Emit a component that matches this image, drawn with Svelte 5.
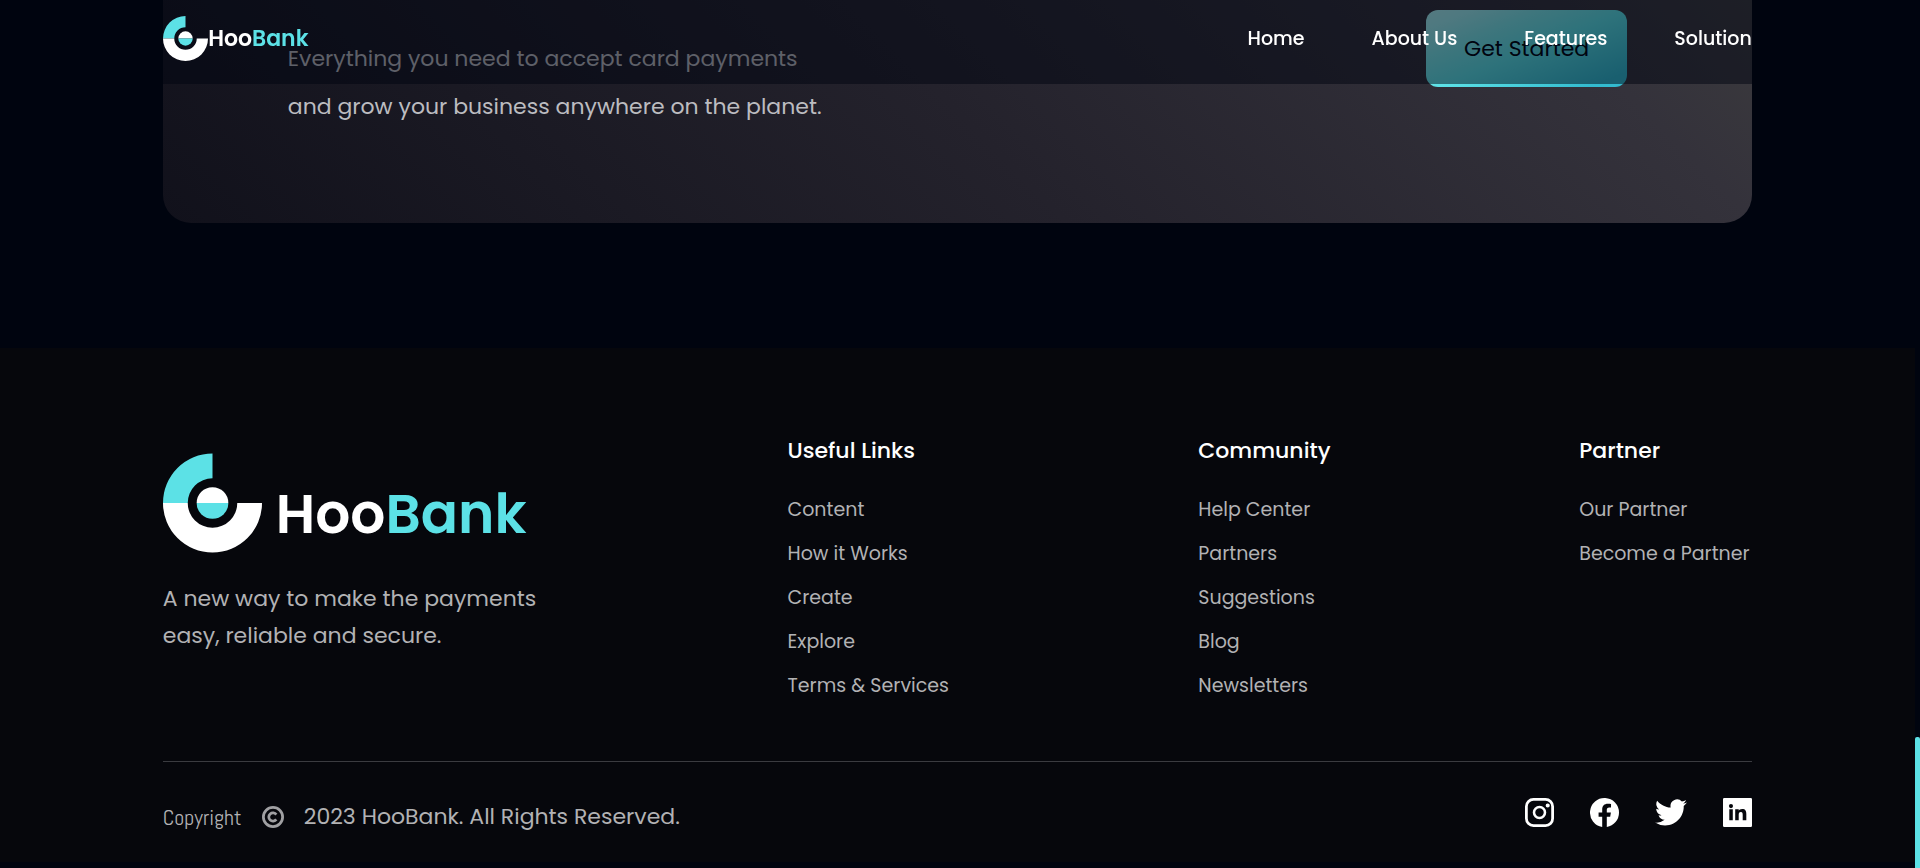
<script>
  const nav = ['Home', 'About Us', 'Features', 'Solution'];
  const columns = [
    { title: 'Useful Links', size: 'wide', links: ['Content', 'How it Works', 'Create', 'Explore', 'Terms & Services'] },
    { title: 'Community', size: 'narrow', links: ['Help Center', 'Partners', 'Suggestions', 'Blog', 'Newsletters'] },
    { title: 'Partner', size: 'partner', links: ['Our Partner', 'Become a Partner'] }
  ];
  const socials = [
    {
      name: 'Instagram', box: '0 0 24 24', width: 29,
      d: 'M7 0h10a7 7 0 0 1 7 7v10a7 7 0 0 1-7 7H7a7 7 0 0 1-7-7V7a7 7 0 0 1 7-7zm0 2.3A4.7 4.7 0 0 0 2.3 7v10A4.7 4.7 0 0 0 7 21.7h10a4.7 4.7 0 0 0 4.7-4.7V7A4.7 4.7 0 0 0 17 2.3zM12 6.4a5.6 5.6 0 1 1 0 11.2 5.6 5.6 0 0 1 0-11.2zm0 2.1a3.5 3.5 0 1 0 0 7 3.5 3.5 0 0 0 0-7zM18.8 4.5a1.7 1.7 0 1 1 0 3.4 1.7 1.7 0 0 1 0-3.4z'
    },
    {
      name: 'Facebook', box: '0 0 24 24', width: 29,
      d: 'M24 12a12 12 0 1 0-13.9 11.9v-8.4H7.1V12h3V9.4c0-3 1.8-4.7 4.6-4.7 1.3 0 2.7.2 2.7.2v3h-1.5c-1.5 0-2 .9-2 1.9V12h3.4l-.6 3.5h-2.8v8.4A12 12 0 0 0 24 12z'
    },
    {
      name: 'Twitter', box: '0 1.5 24 21', width: 32,
      d: 'M23.95 4.57a10 10 0 0 1-2.82.77 4.96 4.96 0 0 0 2.16-2.72c-.95.55-2 .96-3.13 1.18a4.92 4.92 0 0 0-8.38 4.48C7.69 8.1 4.07 6.13 1.64 3.16a4.92 4.92 0 0 0 1.52 6.57 4.9 4.9 0 0 1-2.23-.61v.06c0 2.38 1.7 4.37 3.95 4.83a5 5 0 0 1-2.21.08 4.94 4.94 0 0 0 4.6 3.42A9.87 9.87 0 0 1 0 19.54a14 14 0 0 0 7.55 2.21c9.05 0 14-7.5 14-13.98 0-.21 0-.42-.02-.63a9.94 9.94 0 0 0 2.46-2.55z'
    },
    {
      name: 'LinkedIn', box: '0 0 24 24', width: 29,
      d: 'M1 0h22a1 1 0 0 1 1 1v22a1 1 0 0 1-1 1H1a1 1 0 0 1-1-1V1a1 1 0 0 1 1-1zM5.2 9.4v9h2.9v-9zM6.6 5a1.7 1.7 0 1 0 0 3.4 1.7 1.7 0 0 0 0-3.4zM10.1 9.4v9H13v-4.5c0-1.3.3-2.4 1.8-2.4s1.5 1.3 1.5 2.5v4.4h3v-5c0-2.6-.6-4.3-3.5-4.3-1.4 0-2.4.7-2.8 1.5V9.4z'
    }
  ];
</script>

{#snippet mark()}
  <svg class="mark" viewBox="0 0 100 100" aria-hidden="true">
    <path class="cyan" d="M50 0A50 50 0 0 0 0 50H25A25 25 0 0 1 50 25z" />
    <path class="white" d="M0 50a50 50 0 0 0 100 0H75a25 25 0 0 1-50 0z" />
    <path class="white" d="M34 50a16 16 0 0 1 32 0z" />
    <path class="cyan" d="M34 50a16 16 0 0 0 32 0z" />
  </svg>
{/snippet}

<header>
  <a class="logo small" href="#home">{@render mark()}<span>Hoo<b>Bank</b></span></a>
  <nav aria-label="Main">
    {#each nav as item}
      <a href="#{item}">{item}</a>
    {/each}
  </nav>
</header>

<main>
  <section class="card">
    <p>Everything you need to accept card payments<br />and grow your business anywhere on the planet.</p>
    <button type="button">Get Started</button>
  </section>
</main>

<footer>
  <div class="top">
    <div class="brand">
      <a class="logo large" href="#home">{@render mark()}<span>Hoo<b>Bank</b></span></a>
      <p>A new way to make the payments easy, reliable and secure.</p>
    </div>
    {#each columns as column}
      <section class="column {column.size}">
        <h2>{column.title}</h2>
        <ul>
          {#each column.links as link}
            <li><a href="#{link}">{link}</a></li>
          {/each}
        </ul>
      </section>
    {/each}
  </div>
  <div class="bottom">
    <p class="legal">
      <span class="copy">Copyright</span>
      <svg viewBox="0 0 24 24" width="22" height="22" aria-hidden="true">
        <circle cx="12" cy="12" r="10.5" />
        <path d="M15.6 9.4a4.5 4.5 0 1 0 0 5.2" />
      </svg>
      <span>2023 HooBank. All Rights Reserved.</span>
    </p>
    <div class="socials">
      {#each socials as social}
        <a href="#{social.name}" aria-label={social.name}>
          <svg viewBox={social.box} width={social.width} height="29"><path fill-rule="evenodd" d={social.d} /></svg>
        </a>
      {/each}
    </div>
  </div>
</footer>
<div class="thumb"></div>

<style>
  :global(body) {
    background: #00040f;
    color: #fff;
    font-family: Poppins, Inter, sans-serif;
    font-size: 22px;
  }
  :global(#app) {
    padding-right: 5px;
  }
  a {
    color: inherit;
    text-decoration: none;
  }
  p, h2, ul {
    margin: 0;
    padding: 0;
    list-style: none;
  }
  header {
    position: fixed;
    z-index: 2;
    top: 0;
    left: 0;
    right: 5px;
    height: 84px;
    box-sizing: border-box;
    padding: 0 8.5% 8px;
    display: flex;
    align-items: center;
    justify-content: space-between;
    background: rgba(0, 4, 15, 0.5);
  }
  nav {
    display: flex;
    gap: 67px;
    font-size: 19px;
    font-weight: 500;
  }
  .logo {
    display: flex;
    font-weight: 600;
  }
  .logo b {
    color: #5ce1e6;
    font-weight: inherit;
  }
  .mark {
    flex: none;
  }
  .cyan {
    fill: #5ce1e6;
  }
  .white {
    fill: #fff;
  }
  .small {
    align-items: center;
    font-size: 22px;
  }
  .small .mark {
    width: 45px;
    height: 45px;
  }
  .large {
    align-items: flex-end;
    gap: 14px;
    font-size: 55px;
    line-height: 78px;
  }
  .large .mark {
    width: 99px;
    height: 100px;
  }
  main {
    padding: 0 8.5% 125px;
  }
  .card {
    display: flex;
    justify-content: space-between;
    align-items: flex-start;
    height: 223px;
    box-sizing: border-box;
    padding: 10px 125px 0;
    border-radius: 0 0 28px 28px;
    background: linear-gradient(45deg, #11111b, #24222c 50%, #34323b 88%, #3b3a3d);
  }
  .card p {
    padding-top: 25px;
    line-height: 48px;
    color: #bcbcc0;
  }
  button {
    padding: 0 38px;
    height: 77px;
    border: 0;
    border-radius: 12px;
    font: inherit;
    color: #00040f;
    background: linear-gradient(157.81deg, #def9fa -43.27%, #bef3f5 -21.24%, #9deef0 12.19%, #7ce8ea 29.82%, #5ce1e6 51.94%, #33bbcf 90.29%);
  }
  footer {
    padding: 85px 8.5% 26px;
    background: #06070c;
    color: #b2b2b4;
  }
  .top {
    display: flex;
    justify-content: space-between;
    padding-bottom: 59px;
    border-bottom: 1px solid #3a3b40;
  }
  .brand {
    flex: 0 0 376px;
    padding-top: 20px;
  }
  .brand .logo {
    color: #fff;
  }
  .brand p {
    padding-top: 27px;
    line-height: 37px;
  }
  .wide {
    flex: 0 0 162px;
  }
  .narrow {
    flex: 0 0 130px;
  }
  .partner {
    flex: 0 0 173px;
  }
  h2 {
    font-size: 22px;
    font-weight: 500;
    line-height: 36px;
    color: #fff;
  }
  ul {
    display: grid;
    gap: 12px;
    padding-top: 25px;
    font-size: 19px;
    line-height: 32px;
    white-space: nowrap;
  }
  .bottom {
    display: flex;
    justify-content: space-between;
    padding-top: 36px;
  }
  .legal {
    display: flex;
    align-items: center;
    gap: 20px;
    line-height: 38px;
  }
  .legal svg {
    fill: none;
    stroke: #a0a0a3;
    stroke-width: 3;
  }
  .legal path {
    stroke-width: 3;
  }
  .copy {
    font-family: Abel, "Barlow Condensed", "Roboto Condensed", "Open Sans Condensed", "Archivo Narrow", "Liberation Sans", sans-serif;
  }
  .socials {
    display: flex;
    gap: 36px;
    fill: #fff;
  }
  .socials svg {
    display: block;
  }
  .thumb {
    position: fixed;
    right: 0;
    top: 737px;
    bottom: 0;
    width: 5px;
    border-radius: 2px 2px 0 0;
    background: #5ce1e6;
  }
</style>
